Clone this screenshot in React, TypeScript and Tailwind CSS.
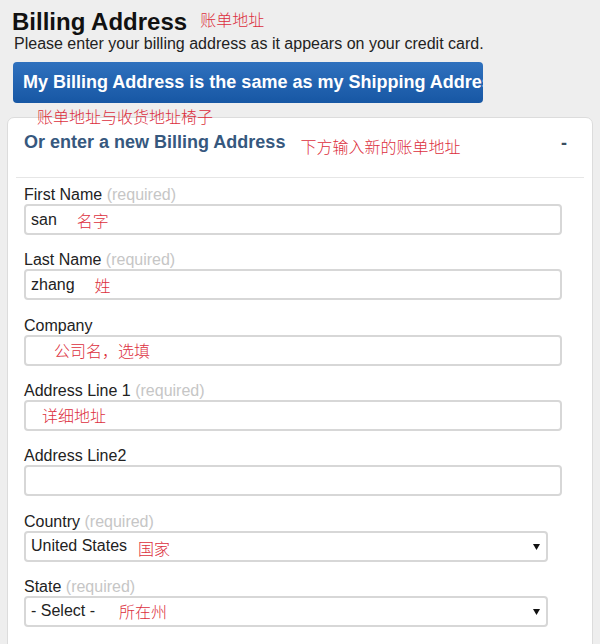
import React from "react";

const red = "text-[#dc2f3d] font-['Noto_Sans_CJK_SC',sans-serif] font-light text-[16px] leading-[18px]";

function Label({ text, required }: { text: string; required?: boolean }) {
  return (
    <div className="text-[16px] leading-[18px] text-[#222] whitespace-nowrap">
      {text}
      {required && <span className="text-[#c6c6c6]"> (required)</span>}
    </div>
  );
}

function Input({ children, width = "w-[538px]", arrow }: { children?: React.ReactNode; width?: string; arrow?: boolean }) {
  return (
    <div
      className={`${width} h-[31px] border-2 border-[#d7d7d7] rounded-[4px] bg-white flex items-center pl-[5px] pr-[5px] text-[16px] leading-[18px] text-[#222] whitespace-nowrap`}
    >
      <div className="flex items-center flex-1">{children}</div>
      {arrow && (
        <svg width="7" height="7" viewBox="0 0 7 7" className="mr-[1px]">
          <polygon points="0,1 7,1 3.5,7" fill="#111" />
        </svg>
      )}
    </div>
  );
}

function Field({ label, required, children, width, arrow }: { label: string; required?: boolean; children?: React.ReactNode; width?: string; arrow?: boolean }) {
  return (
    <div className="mb-[16.33px]">
      <Label text={label} required={required} />
      <Input width={width} arrow={arrow}>
        {children}
      </Input>
    </div>
  );
}

export default function App() {
  return (
    <div className="w-[600px] h-[644px] bg-[#eeeeee] font-['Liberation_Sans',Arial,sans-serif] text-[#222] overflow-hidden">
      <div className="pt-[9px] pl-[12px] flex items-start">
        <h1 className="text-[24px] leading-[26px] font-bold text-[#111]">Billing Address</h1>
        <span className={`${red} ml-[13px] mt-[1px]`}>账单地址</span>
      </div>
      <p className="pl-[14px] text-[16px] leading-[18px] text-[#222]">
        Please enter your billing address as it appears on your credit card.
      </p>
      <div className="ml-[13px] mt-[9px] w-[470px] h-[41px] rounded-[4px] bg-gradient-to-b from-[#2f71be] to-[#1757a4] overflow-hidden whitespace-nowrap text-white font-bold text-[18px] leading-[41px] pl-[10px]">
        My Billing Address is the same as my Shipping Address
      </div>
      <div className="relative h-[14px] z-10">
        <span className={`${red} absolute left-[37px] top-[4px] whitespace-nowrap`}>账单地址与收货地址椅子</span>
      </div>
      <div className="mx-[7px] border border-[#dcdcdc] rounded-t-[7px] bg-white px-[8px] h-[600px]">
        <div className="h-[60px] pt-[14px] px-[8px] border-b border-[#e6e6e6] flex items-start">
          <h2 className="text-[18px] leading-[21px] font-bold text-[#36587e] whitespace-nowrap">Or enter a new Billing Address</h2>
          <span className={`${red} ml-[15px] mt-[5px] whitespace-nowrap`}>下方输入新的账单地址</span>
          <span className="ml-auto mr-[9px] mt-[1px] text-[18px] leading-[21px] font-bold text-[#3a4d60]">-</span>
        </div>
        <div className="px-[8px] pt-[8px]">
          <Field label="First Name" required>
            <span>san</span>
            <span className={`${red} ml-[20px]`}>名字</span>
          </Field>
          <Field label="Last Name" required>
            <span>zhang</span>
            <span className={`${red} ml-[20px]`}>姓</span>
          </Field>
          <Field label="Company">
            <span className={`${red} ml-[23px]`}>公司名，选填</span>
          </Field>
          <Field label="Address Line 1" required>
            <span className={`${red} ml-[11px]`}>详细地址</span>
          </Field>
          <Field label="Address Line2" />
          <Field label="Country" required width="w-[524px]" arrow>
            <span>United States</span>
            <span className={`${red} ml-[11px] mt-[3px]`}>国家</span>
          </Field>
          <Field label="State" required width="w-[524px]" arrow>
            <span>- Select -</span>
            <span className={`${red} ml-[24px]`}>所在州</span>
          </Field>
        </div>
      </div>
    </div>
  );
}
